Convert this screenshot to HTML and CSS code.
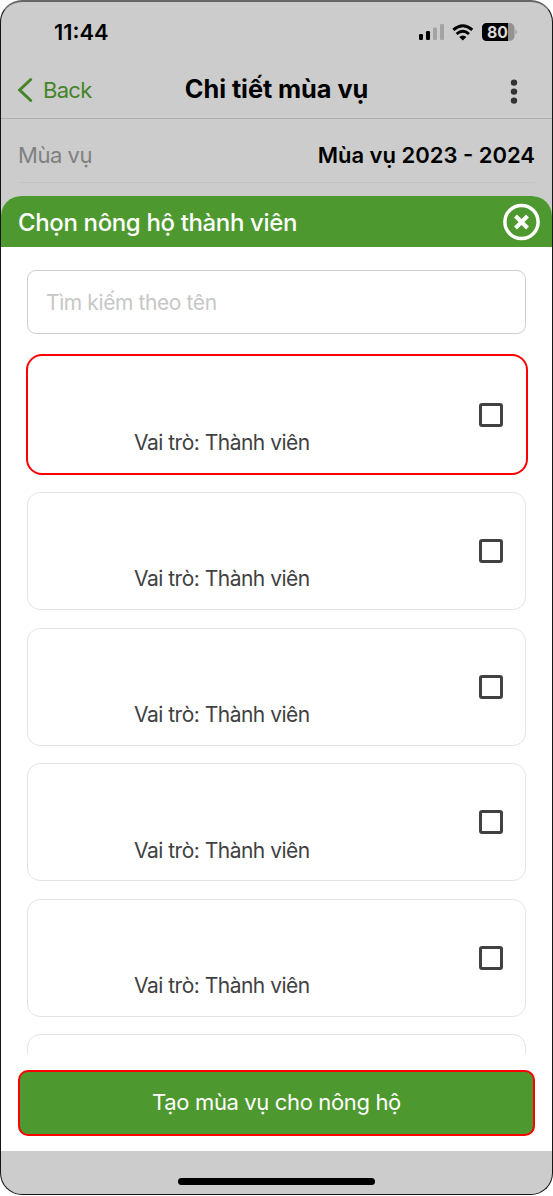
FILE: index.html
```
<!DOCTYPE html>
<html lang="vi">
<head>
<meta charset="utf-8">
<title>Chi tiết mùa vụ</title>
<link rel="stylesheet" href="styles.css">
</head>
<body>
<main class="phone">
  <div class="status">
    <span class="time">11:44</span>
    <svg class="status-icons" width="100" height="22" viewBox="417 21 100 22">
      <rect x="419" y="34" width="4" height="6" rx="1.3"/>
      <rect x="426" y="31" width="4" height="9" rx="1.3"/>
      <g fill="#a3a3a3"><rect x="433" y="27.500" width="4" height="12.500" rx="1.300"/><rect x="440" y="24" width="4" height="16" rx="1.300"/></g>
      <g fill="none" stroke="#000" stroke-width="2.900"><path d="M453.300 29.800Q462.800 21.500 472.300 29.800"/><path d="M456.600 34Q462.800 28.600 469 34"/></g>
      <path d="M459.200 37Q462.800 34 466.400 37L462.800 40.500Z"/>
      <rect x="482" y="23" width="32.500" height="18" rx="5" fill="#929292"/>
      <path d="M487 23H508V41H487Q482 41 482 36V28Q482 23 487 23Z"/>
      <path d="M515.300 29.500Q517.200 30.500 517.200 32T515.300 34.500Z" fill="#a3a3a3"/>
      <text class="charge" x="487" y="37.800" textLength="21" lengthAdjust="spacingAndGlyphs">80</text>
    </svg>
  </div>
  <header class="nav">
    <a class="back"><svg width="16" height="26" viewBox="0 0 16 26"><path d="M13.700 2.500L2.700 13L13.700 23.500" fill="none" stroke="#458429" stroke-width="3" stroke-linecap="round"/></svg><span>Back</span></a>
    <h1 class="title">Chi tiết mùa vụ</h1>
    <svg class="more" width="8" height="28" viewBox="0 0 8 28" fill="#333"><circle cx="4" cy="4.600" r="3.200"/><circle cx="4" cy="13.600" r="3.200"/><circle cx="4" cy="22.600" r="3.200"/></svg>
  </header>
  <div class="season"><span class="season-label">Mùa vụ</span><strong class="season-value">Mùa vụ 2023 - 2024</strong></div>
  <section class="sheet">
    <div class="sheet-head"><h2 class="sheet-title">Chọn nông hộ thành viên</h2>
      <svg width="38" height="38" viewBox="0 0 38 38" fill="none" stroke="#fff"><circle cx="19.500" cy="19" r="16.600" stroke-width="3.500"/><path d="M13.500 13L25.500 25M25.500 13L13.500 25" stroke-width="4"/></svg>
    </div>
    <input class="search" placeholder="Tìm kiếm theo tên">
    <div class="list">
      <label class="card picked"><span class="role">Vai trò: Thành viên</span><i class="check"></i></label>
      <label class="card"><span class="role">Vai trò: Thành viên</span><i class="check"></i></label>
      <label class="card"><span class="role">Vai trò: Thành viên</span><i class="check"></i></label>
      <label class="card"><span class="role">Vai trò: Thành viên</span><i class="check"></i></label>
      <label class="card"><span class="role">Vai trò: Thành viên</span><i class="check"></i></label>
      <label class="card"></label>
    </div>
    <button class="submit"><span class="submit-text">Tạo mùa vụ cho nông hộ</span></button>
  </section>
  <div class="home"><div class="home-bar"></div></div>
</main>
</body>
</html>
```
FILE: styles.css
```
* { box-sizing: border-box; }
body { margin: 0; background: #fff; font-family: Inter, sans-serif; color: #000; }
svg { display: block; flex: none; }
h1, h2 { margin: 0; }
.phone { height: 1195px; border: 1px solid #161616; border-top: 2px solid #666; border-radius: 22px; background: #ccc; overflow: hidden; display: flex; flex-direction: column; }
.status { height: 60px; flex: none; display: flex; justify-content: space-between; padding: 19px 35px 0 53px; }
.time { font-size: 21.8px; line-height: 24px; font-weight: 600; margin-top: -1px; }
.charge { font-size: 16.5px; font-weight: 700; fill: #d8d8d8; }
.nav { height: 57px; flex: none; border-bottom: 1px solid #b0b0b0; display: grid; grid-template-columns: 1fr auto 1fr; align-items: start; padding: 0 34px 0 16px; }
.back { display: flex; align-items: center; gap: 10px; padding-top: 15px; font-size: 22px; line-height: 26px; letter-spacing: -0.7px; color: #458429; }
.title { font-size: 25.3px; line-height: 30px; font-weight: 700; padding-top: 12px; margin: 0 -9px 0 9px; letter-spacing: -0.05px; white-space: nowrap; }
.more { justify-self: end; margin-top: 16px; }
.season { height: 64px; flex: none; margin: 0 17px; border-bottom: 1px solid #c2c2c2; display: flex; justify-content: space-between; padding-top: 21px; font-size: 22px; line-height: 30px; }
.season-label { color: #808080; letter-spacing: -0.45px; }
.season-value { font-weight: 600; }
.sheet { height: 955px; flex: none; margin-top: 13px; border-radius: 20px 20px 0 0; background: #fff; overflow: hidden; display: flex; flex-direction: column; }
.sheet-head { height: 51px; flex: none; background: #4e992f; display: flex; align-items: center; justify-content: space-between; padding: 0 12px 0 17px; }
.sheet-title { color: #fff; font-size: 24px; font-weight: 450; line-height: 30px; letter-spacing: -0.36px; padding-top: 2px; }
.search { height: 64px; flex: none; margin: 23px 26px 0; border: 1.500px solid #cfcfcf; border-radius: 9px; padding: 0 18px; background: #fff; font: 400 21px Inter, sans-serif; letter-spacing: -0.4px; outline: none; }
.search::placeholder { color: #c7c7c7; opacity: 1; }
.list { height: 720px; flex: none; overflow: hidden; padding: 22px 26px 0; display: flex; flex-direction: column; gap: 17.600px; }
.card { height: 118px; flex: none; border: 1px solid #e4e4e4; border-radius: 13px; display: flex; justify-content: space-between; align-items: center; padding: 0 22px 0 106px; }
.card.picked { height: 117px; margin: 0 0 1.400px 1px; border: none; padding: 0 23px 0 106px; outline: 2px solid #f00; border-radius: 14px; }
.role { font-size: 21px; line-height: 28px; letter-spacing: -0.5px; color: #414141; margin-top: 57px; }
.check { width: 24px; height: 24px; border: 3px solid #414141; border-radius: 3px; }
.submit { width: 517px; height: 66px; flex: none; margin: 16px 0 0 17px; border: 2px solid #f00; border-radius: 10px; background: #4e992f; color: #fff; padding: 0 0 2px; font: 400 22px Inter, sans-serif; letter-spacing: -0.36px; }
.home { flex: 1; display: flex; justify-content: center; padding-top: 27px; }
.home-bar { width: 197px; height: 7px; border-radius: 4px; background: #000; }
```
